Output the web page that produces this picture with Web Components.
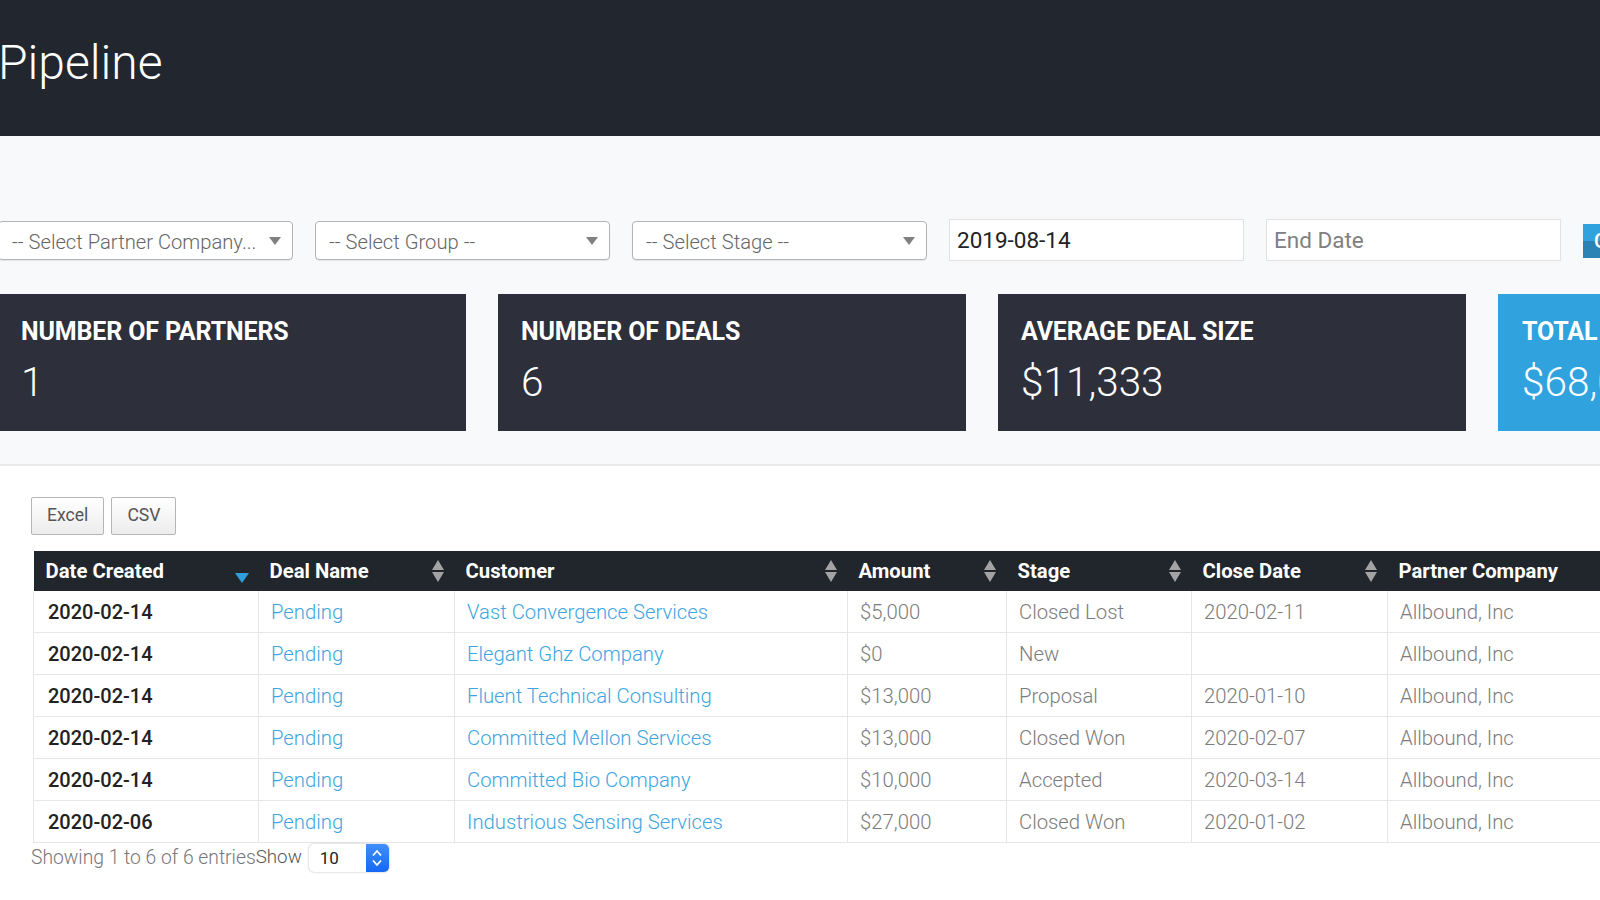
<!DOCTYPE html>
<html>
<head>
<meta charset="utf-8">
<title>Pipeline</title>
<style>
  html, body { margin: 0; height: 100%; overflow: hidden; }
  body { width: 1600px; height: 900px; background: #f8f9fb; font-family: Roboto, "Liberation Sans", sans-serif; }
</style>
</head>
<body>
<page-header>Pipeline</page-header>
<filter-bar>
  <filter-select label="-- Select Partner Company..."></filter-select>
  <filter-select label="-- Select Group --"></filter-select>
  <filter-select label="-- Select Stage --"></filter-select>
  <filter-input value="2019-08-14"></filter-input>
  <filter-input placeholder="End Date"></filter-input>
  <go-button>Go</go-button>
</filter-bar>
<stat-row>
  <stat-card label="NUMBER OF PARTNERS" value="1"></stat-card>
  <stat-card label="NUMBER OF DEALS" value="6"></stat-card>
  <stat-card label="AVERAGE DEAL SIZE" value="$11,333"></stat-card>
  <stat-card label="TOTAL PIPELINE" value="$68,000" accent></stat-card>
</stat-row>
<deals-panel>
  <export-button>Excel</export-button>
  <export-button>CSV</export-button>
</deals-panel>

<script>
class PageHeader extends HTMLElement {
  constructor() {
    super();
    this.attachShadow({ mode: "open" });
    this.shadowRoot.innerHTML = `
      <style>
        :host { display: flex; align-items: center; height: 136px; background: #22262f; color: #fff; }
        h1 { margin: 0 0 10px -2px; font: 300 48px/1 Roboto, sans-serif; }
      </style>
      <h1><slot></slot></h1>`;
  }
}

class FilterBar extends HTMLElement {
  constructor() {
    super();
    this.attachShadow({ mode: "open" });
    this.shadowRoot.innerHTML = `
      <style>
        :host { display: flex; align-items: center; height: 39px; margin: 85px 0 0 -2px; width: 1640px; }
        ::slotted(*) { flex: none; }
      </style>
      <slot></slot>`;
  }
}

class FilterSelect extends HTMLElement {
  constructor() {
    super();
    this.attachShadow({ mode: "open" });
    this.shadowRoot.innerHTML = `
      <style>
        :host { display: flex; align-items: center; justify-content: space-between; box-sizing: border-box; width: 295px; height: 39px; margin-right: 22px; padding: 0 11px 0 13px; background: #fff; border: 1px solid #b4b4b4; border-radius: 4px; box-shadow: 0 1px 1px rgba(0,0,0,.08); }
        span { padding-top: 3px; font: 300 20.2px Roboto, sans-serif; color: #666; white-space: nowrap; }
        i { width: 0; height: 0; border: 6px solid transparent; border-top: 8px solid #808080; border-bottom: 0; }
      </style>
      <span></span><i></i>`;
  }
  connectedCallback() {
    this.shadowRoot.querySelector("span").textContent = this.getAttribute("label");
  }
}

class FilterInput extends HTMLElement {
  constructor() {
    super();
    this.attachShadow({ mode: "open" });
    this.shadowRoot.innerHTML = `
      <style>
        :host { display: flex; align-items: center; box-sizing: border-box; width: 295px; height: 42px; margin: -1px 22px 0 0; padding: 0 8px 0 7px; background: #fff; border: 1px solid #e2e2e2; font: 400 22.5px Roboto, sans-serif; color: #222; }
        :host([placeholder]) { color: #808080; }
      </style>
      <span></span>`;
  }
  connectedCallback() {
    this.shadowRoot.querySelector("span").textContent =
      this.getAttribute("value") || this.getAttribute("placeholder");
  }
}

class GoButton extends HTMLElement {
  constructor() {
    super();
    this.attachShadow({ mode: "open" });
    this.shadowRoot.innerHTML = `
      <style>
        :host { display: block; width: 60px; height: 34px; margin-top: 1px; padding-left: 11px; box-sizing: border-box; background: linear-gradient(#30a2dd 50%, #2a83b4 50%); color: #fff; font: 500 20px/34px Roboto, sans-serif; }
      </style>
      <slot></slot>`;
  }
}

class StatRow extends HTMLElement {
  constructor() {
    super();
    this.attachShadow({ mode: "open" });
    this.shadowRoot.innerHTML = `
      <style>
        :host { display: flex; gap: 32px; width: 1900px; margin: 34px 0 0 -2px; padding-bottom: 33px; }
        ::slotted(*) { flex: none; }
      </style>
      <slot></slot>`;
  }
}

class StatCard extends HTMLElement {
  constructor() {
    super();
    this.attachShadow({ mode: "open" });
    this.shadowRoot.innerHTML = `
      <style>
        :host { display: block; box-sizing: border-box; width: 468px; height: 137px; padding: 23px 22px 0 23px; background: #2d2f3a; color: #fff; }
        :host([accent]) { background: #30a2dd; padding-left: 24px; }
        .label { font: 700 25px/30px Roboto, sans-serif; letter-spacing: -.15px; white-space: nowrap; }
        .value { margin-top: 10px; font: 300 40.5px/50px Roboto, sans-serif; white-space: nowrap; }
      </style>
      <div class="label"></div>
      <div class="value"></div>`;
  }
  connectedCallback() {
    this.shadowRoot.querySelector(".label").textContent = this.getAttribute("label");
    this.shadowRoot.querySelector(".value").textContent = this.getAttribute("value");
  }
}

class ExportButton extends HTMLElement {
  constructor() {
    super();
    this.attachShadow({ mode: "open" });
    this.shadowRoot.innerHTML = `
      <style>
        :host { display: inline-flex; align-items: center; justify-content: center; box-sizing: border-box; height: 38px; padding: 0 15px 2px; background: linear-gradient(#fff, #ececec); border: 1px solid #b5b5b5; border-radius: 2px; font: 400 17.6px Roboto, sans-serif; color: #555; }
      </style>
      <slot></slot>`;
  }
}

const DEALS = [
  ["2020-02-14", "Pending", "Vast Convergence Services", "$5,000", "Closed Lost", "2020-02-11", "Allbound, Inc"],
  ["2020-02-14", "Pending", "Elegant Ghz Company", "$0", "New", "", "Allbound, Inc"],
  ["2020-02-14", "Pending", "Fluent Technical Consulting", "$13,000", "Proposal", "2020-01-10", "Allbound, Inc"],
  ["2020-02-14", "Pending", "Committed Mellon Services", "$13,000", "Closed Won", "2020-02-07", "Allbound, Inc"],
  ["2020-02-14", "Pending", "Committed Bio Company", "$10,000", "Accepted", "2020-03-14", "Allbound, Inc"],
  ["2020-02-06", "Pending", "Industrious Sensing Services", "$27,000", "Closed Won", "2020-01-02", "Allbound, Inc"],
];

const COLUMNS = [
  { name: "Date Created", width: 225, sort: "down" },
  { name: "Deal Name", width: 196, sort: "both" },
  { name: "Customer", width: 393, sort: "both" },
  { name: "Amount", width: 159, sort: "both" },
  { name: "Stage", width: 185, sort: "both" },
  { name: "Close Date", width: 196, sort: "both" },
  { name: "Partner Company", width: 250 },
];

class DealsTable extends HTMLElement {
  constructor() {
    super();
    this.attachShadow({ mode: "open" });
    const cols = COLUMNS.map((c) => `<col style="width:${c.width}px">`).join("");
    const head = COLUMNS.map((c) => `<th><div>${c.name}${DealsTable.sortIcon(c.sort)}</div></th>`).join("");
    const rows = DEALS.map((row) => `<tr>${row.map((v, i) => {
      const link = i === 1 || i === 2;
      return `<td class="${i === 0 ? "date" : ""}${link ? "link" : ""}">${v}</td>`;
    }).join("")}</tr>`).join("");
    this.shadowRoot.innerHTML = `
      <style>
        :host { display: block; width: 1604px; margin-left: 2px; }
        table { width: 1604px; table-layout: fixed; border-collapse: collapse; font-family: Roboto, sans-serif; }
        th { height: 40px; padding: 0 0 0 11px; background: #21262d; color: #fff; font-size: 20.3px; font-weight: 700; text-align: left; white-space: nowrap; }
        th:first-child { padding-left: 12px; }
        th div { display: flex; align-items: center; justify-content: space-between; padding-right: 10px; }
        td { box-sizing: border-box; height: 41.9px; padding: 1px 12px 0; border: 1px solid #e6e6e6; border-top: 0; font-size: 20.3px; font-weight: 300; color: #7c7c7c; white-space: nowrap; }
        td.date { padding-left: 14px; font-size: 20px; font-weight: 500; color: #222; }
        td.link { color: #3ea5e0; }
        svg { display: block; flex: none; }
      </style>
      <table><colgroup>${cols}</colgroup><thead><tr>${head}</tr></thead><tbody>${rows}</tbody></table>`;
  }

  static sortIcon(kind) {
    if (kind === "down") {
      return `<svg width="16" height="12" viewBox="0 0 16 12" style="margin:14px -1px 0 0"><path d="M1 1h14L8 11z" fill="#2f9fdc"/></svg>`;
    }
    if (kind === "both") {
      return `<svg width="14" height="24" viewBox="0 0 14 24"><path d="M7 1l6 10H1zM1 13h12L7 23z" fill="#a3a3a3"/></svg>`;
    }
    return "";
  }
}

class TableFooter extends HTMLElement {
  constructor() {
    super();
    this.attachShadow({ mode: "open" });
    this.shadowRoot.innerHTML = `
      <style>
        :host { display: flex; align-items: center; height: 30px; font-family: Roboto, sans-serif; font-weight: 300; }
        .info { font-size: 19.3px; color: #777; }
        .show { font-size: 18.8px; color: #555; margin: -1px 7px 0 0; }
        .picker { display: flex; box-sizing: border-box; width: 80px; height: 28px; background: #fff; border-radius: 5px; box-shadow: 0 0 2px rgba(0,0,0,.35); overflow: hidden; }
        .num { flex: 1; padding-left: 11px; font: 400 17px/28px Roboto, sans-serif; color: #222; }
        .step { display: flex; align-items: center; justify-content: center; width: 23px; background: linear-gradient(#3f8ffb, #1668f5); }
      </style>
      <span class="info">Showing 1 to 6 of 6 entries</span>
      <span class="show">Show</span>
      <div class="picker">
        <span class="num">10</span>
        <span class="step"><svg width="12" height="20" viewBox="0 0 12 20"><path d="M2 7.5L6 3l4 4.5M2 12.5L6 17l4-4.5" fill="none" stroke="#fff" stroke-width="1.8"/></svg></span>
      </div>`;
  }
}

class DealsPanel extends HTMLElement {
  constructor() {
    super();
    this.attachShadow({ mode: "open" });
    this.shadowRoot.innerHTML = `
      <style>
        :host { display: block; box-sizing: border-box; height: 436px; padding: 31px 0 0 31px; background: #fff; border-top: 2px solid #e9e9e9; }
        .buttons { display: flex; gap: 7px; height: 38px; margin-bottom: 16px; }
      </style>
      <div class="buttons"><slot></slot></div>
      <deals-table></deals-table>
      <table-footer></table-footer>`;
  }
}

customElements.define("page-header", PageHeader);
customElements.define("filter-bar", FilterBar);
customElements.define("filter-select", FilterSelect);
customElements.define("filter-input", FilterInput);
customElements.define("go-button", GoButton);
customElements.define("stat-row", StatRow);
customElements.define("stat-card", StatCard);
customElements.define("export-button", ExportButton);
customElements.define("deals-table", DealsTable);
customElements.define("table-footer", TableFooter);
customElements.define("deals-panel", DealsPanel);
</script>
</body>
</html>
